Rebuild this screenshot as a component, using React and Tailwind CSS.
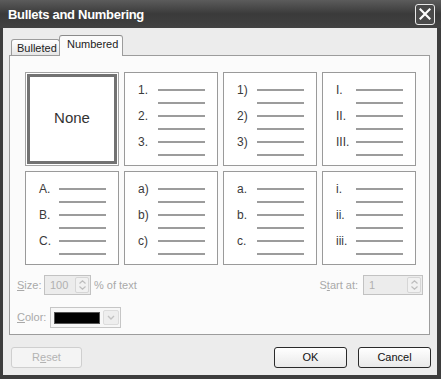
const tiles = [
  null,
  ["1.", "2.", "3."],
  ["1)", "2)", "3)"],
  ["I.", "II.", "III."],
  ["A.", "B.", "C."],
  ["a)", "b)", "c)"],
  ["a.", "b.", "c."],
  ["i.", "ii.", "iii."],
];

function Tile({ marks }) {
  if (!marks) {
    return (
      <div className="w-[94px] h-[94px] border border-[#a3a3a3] bg-white p-[1px]">
        <div className="h-full border-[3px] border-[#727272] flex items-center justify-center text-[15px] text-[#333] pb-[2px]">
          None
        </div>
      </div>
    );
  }
  return (
    <div className="w-[94px] h-[94px] border border-[#9a9a9a] bg-white pt-[10px] pl-[13px] flex flex-col">
      {[0, 1, 2, 3, 4, 5].map((i) => (
        <div key={i} className="h-[13px] flex items-start">
          <span className="w-[20px] text-[12px] leading-[13px] text-[#3a3a3a] mt-[1px]">
            {i % 2 === 0 ? marks[i / 2] : ""}
          </span>
          <div className="w-[47px] h-[2px] bg-[#9c9c9c] mt-[6px]" />
        </div>
      ))}
    </div>
  );
}

function Spinner() {
  return (
    <div className="w-[14px] h-[16px] mr-[1px] rounded-[2px] border border-[#d6d6d6] bg-[#f1f1f1] flex flex-col items-center justify-center gap-[2px]">
      <svg width="7" height="4" viewBox="0 0 7 4">
        <path d="M0.5 3.5 L3.5 0.8 L6.5 3.5" fill="none" stroke="#bdbdbd" strokeWidth="1.2" />
      </svg>
      <svg width="7" height="4" viewBox="0 0 7 4">
        <path d="M0.5 0.5 L3.5 3.2 L6.5 0.5" fill="none" stroke="#bdbdbd" strokeWidth="1.2" />
      </svg>
    </div>
  );
}

export default function App() {
  return (
    <div className="w-[441px] h-[379px] bg-[#3d3d3d] flex flex-col font-['Liberation_Sans',Arial,sans-serif] overflow-hidden">
      {/* Title bar */}
      <div className="h-[28px] flex items-center justify-between pl-[8px] pr-[6px] bg-gradient-to-b from-[#5c5c5c] via-[#3a3a3a] to-[#424242]">
        <span className="text-white font-bold text-[13px] tracking-[-0.3px] pt-[1px]">
          Bullets and Numbering
        </span>
        <div className="w-[20px] h-[21px] rounded-[3px] border border-[#e8e8e8] bg-[#4a4a4a] flex items-center justify-center">
          <svg width="12" height="12" viewBox="0 0 12 12">
            <path d="M1.5 1.5 L10.5 10.5 M10.5 1.5 L1.5 10.5" stroke="#ffffff" strokeWidth="2.2" strokeLinecap="square" />
          </svg>
        </div>
      </div>

      {/* Body */}
      <div className="ml-[3px] mr-[4px] h-[347px] bg-[#ececec] flex flex-col text-[11px]">
        {/* Tabs */}
        <div className="mt-[7px] h-[20px] flex items-end pl-[8px] relative z-10">
          <div className="w-[49px] h-[16px] border border-b-0 border-[#9c9c9c] rounded-t-[3px] bg-gradient-to-b from-white to-[#e6e6e6] text-[#222] pl-[5px] pt-[2px] leading-[13px]">
            Bulleted
          </div>
          <div className="w-[64px] h-[21px] -mb-px -ml-px border border-b-0 border-[#9c9c9c] border-t-[#8a8a8a] rounded-t-[3px] bg-[#fbfbfb] text-[#222] pl-[7px] pt-[2px] leading-[13px]">
            Numbered
          </div>
        </div>

        {/* Panel */}
        <div className="ml-[6px] w-[421px] h-[280px] border border-[#9c9c9c] bg-[#fbfbfb] pt-[16px] pl-[15px] pr-[6px]">
          <div className="grid grid-cols-[repeat(4,94px)] gap-[5px]">
            {tiles.map((m, i) => (
              <Tile key={i} marks={m} />
            ))}
          </div>

          <div className="mt-[10px] h-[20px] flex items-center text-[#a9a9a9] -ml-[8px]">
            <span className="w-[27px]">
              <span className="underline">S</span>ize:
            </span>
            <div className="w-[47px] h-[20px] border border-[#c2c2c2] bg-[#ececec] flex items-center justify-between pl-[5px]">
              <span className="text-[#b0b0b0]">100</span>
              <Spinner />
            </div>
            <span className="ml-[3px]">% of text</span>
            <span className="ml-auto mr-[5px]">
              S<span className="underline">t</span>art at:
            </span>
            <div className="w-[60px] h-[20px] border border-[#c2c2c2] bg-[#ececec] flex items-center justify-between pl-[5px]">
              <span className="text-[#b0b0b0]">1</span>
              <Spinner />
            </div>
          </div>

          <div className="mt-[12px] h-[21px] flex items-center text-[#a9a9a9] -ml-[8px]">
            <span className="w-[33px]">
              <span className="underline">C</span>olor:
            </span>
            <div className="w-[71px] h-[21px] border border-[#c6c6c6] bg-[#f7f7f7] flex items-center pl-[3px]">
              <div className="w-[46px] h-[12px] bg-black border border-[#555]" />
              <div className="ml-[3px] w-[16px] h-[15px] rounded-[2px] border border-[#dcdcdc] bg-[#eeeeee] flex items-center justify-center">
                <svg width="8" height="5" viewBox="0 0 8 5">
                  <path d="M1 1 L4 4 L7 1" fill="none" stroke="#c2c2c2" strokeWidth="1.4" />
                </svg>
              </div>
            </div>
          </div>
        </div>

        {/* Buttons */}
        <div className="mt-[12px] flex items-center pl-[8px] pr-[6px]">
          <div className="w-[71px] h-[21px] rounded-[3px] border border-[#cfcfcf] bg-[#f4f4f4] text-[#b3b3b3] flex items-center justify-center">
            R<span className="underline">e</span>set
          </div>
          <div className="ml-auto w-[73px] h-[21px] rounded-[3px] border border-[#2a2a2a] bg-gradient-to-b from-white to-[#e9e9e9] text-[#111] flex items-center justify-center">
            OK
          </div>
          <div className="ml-[11px] w-[73px] h-[21px] rounded-[3px] border border-[#2a2a2a] bg-gradient-to-b from-white to-[#e9e9e9] text-[#111] flex items-center justify-center">
            Cancel
          </div>
        </div>
      </div>
    </div>
  );
}
